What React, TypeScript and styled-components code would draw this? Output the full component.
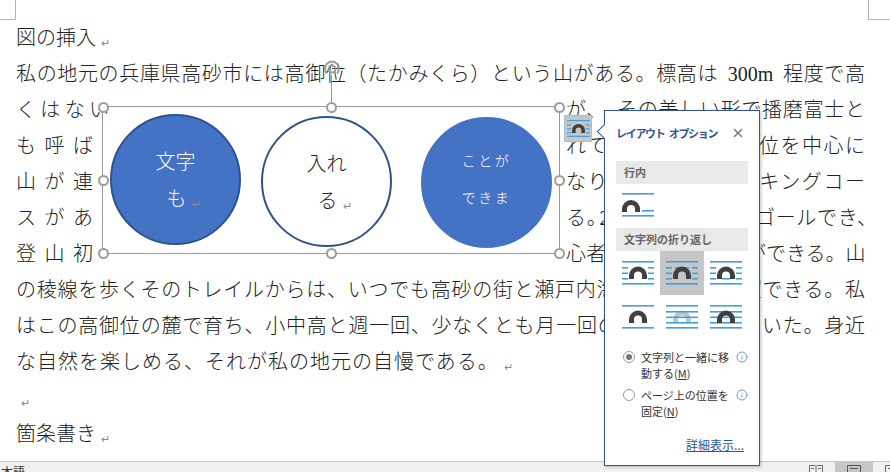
import styled, { createGlobalStyle } from "styled-components"
import { Info, X } from "lucide-react"

const GlobalStyle = createGlobalStyle`
    html, body {
        margin: 0;
        padding: 0;
        background: #fff;
    }
    * {
        box-sizing: border-box;
    }
`
const Page = styled.div`
    position: relative;
    width: 890px;
    height: 472px;
    overflow: hidden;
    display: flex;
    flex-direction: column;
    background: #fff;
    font-family: "Liberation Serif", "Noto Sans CJK JP", serif;
    color: #222;
`
const CropMark = styled.div<{ $side: "left" | "right" }>`
    position: absolute;
    top: 0;
    ${p => p.$side === "left" ? "left: 0; border-right: 1px solid #b4b4b4;" : "left: 868px; border-left: 1px solid #b4b4b4;"}
    width: ${p => p.$side === "left" ? "16px" : "22px"};
    height: 20px;
    border-bottom: 1px solid #b4b4b4;
`
const DocBody = styled.div`
    flex: 1;
    padding: 20px 25px 0 16px;
    overflow: hidden;
    font-size: 20px;
    font-weight: 300;
`
const Line = styled.div<{ $fit?: boolean; $width?: number; $track?: number }>`
    height: 36px;
    line-height: 36px;
    white-space: nowrap;
    width: ${p => p.$width ? p.$width + "px" : "auto"};
    letter-spacing: ${p => p.$track ?? 0}px;
    text-align: ${p => p.$fit ? "justify" : "left"};
    text-align-last: ${p => p.$fit ? "justify" : "left"};
    text-justify: inter-character;
`
const Mark = styled.span<{ $hang?: boolean }>`
    font-family: "DejaVu Sans", sans-serif;
    font-size: 11px;
    letter-spacing: 0;
    color: #8a8a8a;
    margin-left: 5px;
    margin-right: ${p => p.$hang ? "-16px" : "0"};
    position: relative;
    top: 2px;
`
// 約物の詰め（Word の行内調整の代わり）
const Punct = styled.span<{ $adjust: number }>`
    margin-right: ${p => p.$adjust}px;
`
const Latin = styled.span`
    margin: 0 4px;
`
const WrapRegion = styled.div`
    display: grid;
    grid-template-columns: 86px 464px 299px;
`
const Column = styled.div`
    display: flex;
    flex-direction: column;
`
const Frame = styled.div`
    position: relative;
    width: 458px;
    height: 148px;
    margin-top: 14px;
    border: 1px solid #999;
    display: flex;
    align-items: flex-start;
`
const Handle = styled.span<{ $x: number; $y: number }>`
    position: absolute;
    left: ${p => p.$x}%;
    top: ${p => p.$y}%;
    width: 11px;
    height: 11px;
    margin: -5.5px 0 0 -5.5px;
    border-radius: 50%;
    border: 2px solid #9c9c9c;
    background: #fff;
`
const RotateStem = styled.span`
    position: absolute;
    left: 228px;
    top: -32px;
    width: 1px;
    height: 32px;
    background: #999;
`
const RotateIcon = styled.svg`
    position: absolute;
    left: 219px;
    top: -48px;
`
const Circle = styled.div<{ $fill: string; $stroke: string; $top: number; $left: number; $size: number; $spacing: number; $color: string; $shift: number }>`
    width: 131px;
    height: 131px;
    flex: none;
    margin: ${p => p.$top}px 0 0 ${p => p.$left}px;
    padding: ${p => p.$shift > 0 ? p.$shift : 0}px 0 ${p => p.$shift < 0 ? -p.$shift : 0}px;
    border-radius: 50%;
    background: ${p => p.$fill};
    border: 2px solid ${p => p.$stroke};
    color: ${p => p.$color};
    font-size: ${p => p.$size}px;
    letter-spacing: ${p => p.$spacing}px;
    line-height: 37px;
    text-align: center;
    display: flex;
    flex-direction: column;
    justify-content: center;
`
const AnchorButton = styled.div`
    position: absolute;
    left: 564px;
    top: 115px;
    width: 28px;
    height: 27px;
    background: #c6c6c6;
    border: 1px solid #a8bcd4;
    display: flex;
    align-items: center;
    justify-content: center;
`
const Popup = styled.div`
    position: absolute;
    left: 604px;
    top: 110px;
    width: 156px;
    height: 356px;
    padding: 0 11px;
    background: #fff;
    border: 1px solid #2b579a;
    box-shadow: 1px 1px 3px rgba(0, 0, 0, 0.25);
    font-family: "Noto Sans CJK JP", sans-serif;
    font-size: 11px;
    color: #444;
    display: flex;
    flex-direction: column;
`
const Pointer = styled.span`
    position: absolute;
    left: -6px;
    top: 15px;
    width: 11px;
    height: 11px;
    background: #fff;
    border-left: 1px solid #2b579a;
    border-bottom: 1px solid #2b579a;
    transform: rotate(45deg);
`
const PopupHeader = styled.div`
    height: 50px;
    flex: none;
    display: flex;
    align-items: center;
    justify-content: space-between;
    padding: 0 3px 6px 0;
    color: #2b579a;
    font-size: 11px;
    font-weight: 700;
    letter-spacing: -1.3px;
    word-spacing: 3px;
    white-space: nowrap;
`
const SectionTitle = styled.div`
    height: 23px;
    flex: none;
    padding-left: 8px;
    line-height: 23px;
    background: #e9e9e9;
    color: #666;
    font-weight: 700;
`
const InlineRow = styled.div`
    height: 44px;
    flex: none;
    padding: 9px 0 0 6px;
`
const WrapGrid = styled.div`
    display: grid;
    grid-template-columns: repeat(3, 44px);
    grid-auto-rows: 44px;
    flex: none;
`
const IconCell = styled.div<{ $active?: boolean }>`
    display: flex;
    align-items: center;
    justify-content: center;
    padding-bottom: 1px;
    background: ${p => p.$active ? "#c6c6c6" : "transparent"};
`
const RadioRow = styled.div<{ $top: number }>`
    display: grid;
    grid-template-columns: 13px 1fr 12px;
    column-gap: 5px;
    margin: ${p => p.$top}px 0 0 7px;
    line-height: 16px;
    color: #333;
`
const Radio = styled.span<{ $checked?: boolean }>`
    width: 12px;
    height: 12px;
    margin-top: 2px;
    border-radius: 50%;
    border: 1px solid #999;
    display: flex;
    align-items: center;
    justify-content: center;
    &::after {
        content: "";
        width: 6px;
        height: 6px;
        border-radius: 50%;
        background: ${p => p.$checked ? "#777" : "transparent"};
    }
`
const InfoIcon = styled(Info)`
    margin-top: 2px;
`
const Hotkey = styled.span`
    text-decoration: underline;
`
const DetailLink = styled.a`
    margin: auto 4px 12px auto;
    color: #2b579a;
    font-size: 12px;
    text-decoration: underline;
`
const StatusBar = styled.div`
    position: relative;
    height: 11px;
    flex: none;
    background: #f1f1f1;
    border-top: 1px solid #c8c8c8;
    overflow: hidden;
    display: flex;
    align-items: flex-start;
    font-family: "Noto Sans CJK JP", sans-serif;
    font-size: 12px;
    line-height: 14px;
    color: #333;
`
const StatusText = styled.span`
    margin: 3px 0 0 1px;
    flex: 1;
`
const ViewButton = styled.div<{ $active?: boolean; $width: number; $inset?: number }>`
    width: ${p => p.$width}px;
    height: 11px;
    flex: none;
    display: flex;
    justify-content: ${p => p.$inset ? "flex-start" : "center"};
    padding: 3px 0 0 ${p => p.$inset ?? 0}px;
    background: ${p => p.$active ? "#c6c6c6" : "transparent"};
    svg {
        flex: none;
    }
`

type WrapKind = "inline" | "square" | "tight" | "through" | "topBottom" | "behind" | "front"

const BLUE = "#42a0dc"
const ARCH = "#404040"

// 折り返しアイコン。全部同じ 32x24 の枠で描く
function LayoutIcon({ kind, width = 32 }: { kind: WrapKind; width?: number }) {
    const height = width * 0.75
    const arch = <path d="M9.5 18 V14.5 a6.5 6.5 0 0 1 13 0 V18" fill="none" stroke={kind === "behind" ? "#c4c4c4" : ARCH} strokeWidth="5" />
    const rule = (y: number, x1 = 0, x2 = 32) => <rect x={x1} y={y} width={x2 - x1} height="1.6" fill={BLUE} key={`${y}-${x1}`} />

    if (kind === "inline") {
        return (
            <svg width={width} height={height} viewBox="0 0 32 24">
                {rule(0)}
                <path d="M2.5 19 V16 a6.5 6.5 0 0 1 13 0 V19" fill="none" stroke={ARCH} strokeWidth="5" />
                {rule(17, 20)}
                {rule(22)}
            </svg>
        )
    }

    const mids = [6, 11.5, 17]

    return (
        <svg width={width} height={height} viewBox="0 0 32 24">
            {kind === "behind" && arch}
            {rule(0)}
            {kind === "tight" && rule(6, 9, 23)}
            {(kind === "square" || kind === "tight" || kind === "through") && mids.map(y => [rule(y, 0, 6), rule(y, 26, 32)])}
            {kind === "through" && rule(17, 12, 20)}
            {(kind === "behind" || kind === "front") && mids.map(y => rule(y))}
            {rule(22)}
            {kind !== "behind" && arch}
        </svg>
    )
}

const handles = [
    [0, 0], [50, 0], [100, 0],
    [0, 50], [100, 50],
    [0, 100], [50, 100], [100, 100],
]

const wrapKinds: WrapKind[] = ["square", "tight", "through", "topBottom", "behind", "front"]

export default function App() {
    return (
        <Page>
            <GlobalStyle />
            <CropMark $side="left" />
            <CropMark $side="right" />
            <DocBody>
                <Line>図の挿入<Mark>↵</Mark></Line>
                <Line $fit>私の地元の兵庫県高砂市には高御位（たかみくら）という山がある。標高は<Latin> 300m </Latin>程度で高</Line>
                <WrapRegion>
                    <Column>
                        <Line $fit $width={93}>くはない</Line>
                        <Line $fit $width={77}>も呼ば</Line>
                        <Line $fit $width={77}>山が連</Line>
                        <Line $fit $width={77}>スがあ</Line>
                        <Line $fit $width={77}>登山初</Line>
                    </Column>
                    <div>
                        <Frame>
                            <Circle $fill="#4472c4" $stroke="#2f528f" $top={7} $left={7} $size={20} $spacing={0} $color="#fff" $shift={5}>
                                <div>文字</div>
                                <div>も<Mark $hang>↵</Mark></div>
                            </Circle>
                            <Circle $fill="#fff" $stroke="#2f528f" $top={9} $left={20} $size={20} $spacing={0} $color="#222" $shift={5}>
                                <div>入れ</div>
                                <div>る<Mark $hang>↵</Mark></div>
                            </Circle>
                            <Circle $fill="#4472c4" $stroke="#4472c4" $top={10} $left={29} $size={14} $spacing={2.5} $color="#fff" $shift={-5}>
                                <div>ことが</div>
                                <div>できま</div>
                            </Circle>
                            <RotateStem />
                            <RotateIcon width="20" height="20" viewBox="0 0 20 20">
                                <path d="M5 14.5 A7 7 0 1 1 15 14.5" fill="none" stroke="#9c9c9c" strokeWidth="2" />
                                <circle cx="10" cy="10" r="3.5" fill="none" stroke="#9c9c9c" strokeWidth="2" />
                            </RotateIcon>
                            {handles.map(([x, y]) => <Handle key={`${x}-${y}`} $x={x} $y={y} />)}
                        </Frame>
                    </div>
                    <Column>
                        <Line $fit>が<Punct $adjust={10}>、</Punct>その美しい形で播磨富士と</Line>
                        <Line $fit>れて親しまれ、高御位を中心に</Line>
                        <Line $fit>なり、数多くのハイキングコー</Line>
                        <Line $fit>る<Punct $adjust={-8}>。</Punct>2時間程度の道でゴールでき<Punct $adjust={-12}>、</Punct></Line>
                        <Line $fit>心者でも楽しむことができる。山</Line>
                    </Column>
                </WrapRegion>
                <Line $fit>の稜線を歩くそのトレイルからは、いつでも高砂の街と瀬戸内海の多島美を一望できる。私</Line>
                <Line $fit>はこの高御位の麓で育ち、小中高と週一回、少なくとも月一回のペースで登っていた。身近</Line>
                <Line $track={1}>な自然を楽しめる、それが私の地元の自慢である。<Mark>↵</Mark></Line>
                <Line><Mark>↵</Mark></Line>
                <Line>箇条書き<Mark>↵</Mark></Line>
            </DocBody>
            <StatusBar>
                <StatusText>本語</StatusText>
                <ViewButton $width={38}>
                    <svg width="14" height="8" viewBox="0 0 14 8">
                        <path d="M.5 8 V.5 H6 L7 1.5 L8 .5 H13.5 V8 M7 1.5 V8 M2 3.5 H5 M9 3.5 H12" fill="none" stroke="#666" />
                    </svg>
                </ViewButton>
                <ViewButton $width={38} $active>
                    <svg width="14" height="8" viewBox="0 0 14 8">
                        <path d="M.5 8 V.5 H13.5 V8 M3 3.5 H11" fill="none" stroke="#555" />
                    </svg>
                </ViewButton>
                <ViewButton $width={17} $inset={12}>
                    <svg width="14" height="8" viewBox="0 0 14 8">
                        <path d="M.5 8 V.5 H13.5 M3 3.5 H13" fill="none" stroke="#666" />
                    </svg>
                </ViewButton>
            </StatusBar>
            <AnchorButton>
                <LayoutIcon kind="square" width={23} />
            </AnchorButton>
            <Popup>
                <Pointer />
                <PopupHeader>
                    <span>レイアウト オプション</span>
                    <X size={14} strokeWidth={2.5} color="#777" />
                </PopupHeader>
                <SectionTitle>行内</SectionTitle>
                <InlineRow>
                    <LayoutIcon kind="inline" />
                </InlineRow>
                <SectionTitle>文字列の折り返し</SectionTitle>
                <WrapGrid>
                    {wrapKinds.map(kind => (
                        <IconCell key={kind} $active={kind === "tight"}>
                            <LayoutIcon kind={kind} />
                        </IconCell>
                    ))}
                </WrapGrid>
                <RadioRow $top={10}>
                    <Radio $checked />
                    <span>文字列と一緒に移動する(<Hotkey>M</Hotkey>)</span>
                    <InfoIcon size={12} color="#6b9bd2" />
                </RadioRow>
                <RadioRow $top={6}>
                    <Radio />
                    <span>ページ上の位置を固定(<Hotkey>N</Hotkey>)</span>
                    <InfoIcon size={12} color="#6b9bd2" />
                </RadioRow>
                <DetailLink>詳細表示...</DetailLink>
            </Popup>
        </Page>
    )
}
